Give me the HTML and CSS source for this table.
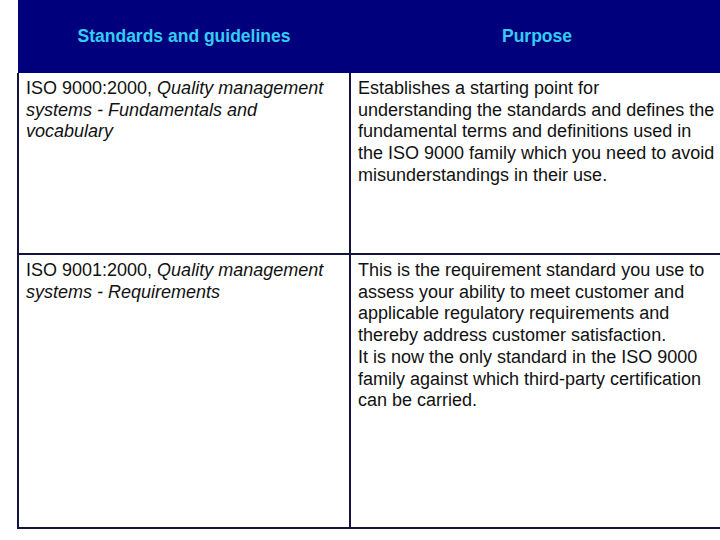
FILE: index.html
```html
<!DOCTYPE html>
<html>
<head>
<meta charset="utf-8">
<link rel="stylesheet" href="styles.css">
</head>
<body>
<table class="iso">
  <colgroup><col class="c1"><col class="c2"></colgroup>
  <thead>
    <tr class="head">
      <th>Standards and guidelines</th>
      <th>Purpose</th>
    </tr>
  </thead>
  <tbody>
    <tr class="r1">
      <td>ISO 9000:2000, <i>Quality management systems - Fundamentals and vocabulary</i></td>
      <td>Establishes a starting point for understanding the standards and defines the fundamental terms and definitions used in the ISO 9000 family which you need to avoid misunderstandings in their use.</td>
    </tr>
    <tr class="r2">
      <td>ISO 9001:2000, <i>Quality management systems - Requirements</i></td>
      <td>This is the requirement standard you use to assess your ability to meet customer and applicable regulatory requirements and thereby address customer satisfaction.<br>It is now the only standard in the ISO 9000 family against which third-party certification can be carried.</td>
    </tr>
  </tbody>
</table>
</body>
</html>
```
FILE: styles.css
```css
html, body {
  margin: 0;
  padding: 0;
  background: #ffffff;
  overflow: hidden;
}
body {
  width: 720px;
  height: 540px;
  font-family: "Liberation Sans", Arial, sans-serif;
}
.iso {
  margin-left: 17px;
  border-collapse: collapse;
  table-layout: fixed;
  width: 706px;
  font-size: 18px;
  color: #111111;
}
.c1 { width: 332px; }
.c2 { width: 374px; }
.head th {
  background: #00007c;
  color: #33ccf5;
  font-weight: bold;
  font-size: 17.5px;
  height: 73px;
  padding: 0;
  text-align: center;
  vertical-align: middle;
  border: none;
}
.iso td {
  border: 2px solid #14143c;
  vertical-align: top;
  padding: 5px 2px 0 7px;
  line-height: 21.7px;
  text-align: left;
}
.iso td:last-child {
  border-right: none;
  padding-right: 8px;
}
.iso tbody tr:first-child td { border-top: none; }
.r1 td { height: 175px; }
.r2 td { height: 267px; }
```
